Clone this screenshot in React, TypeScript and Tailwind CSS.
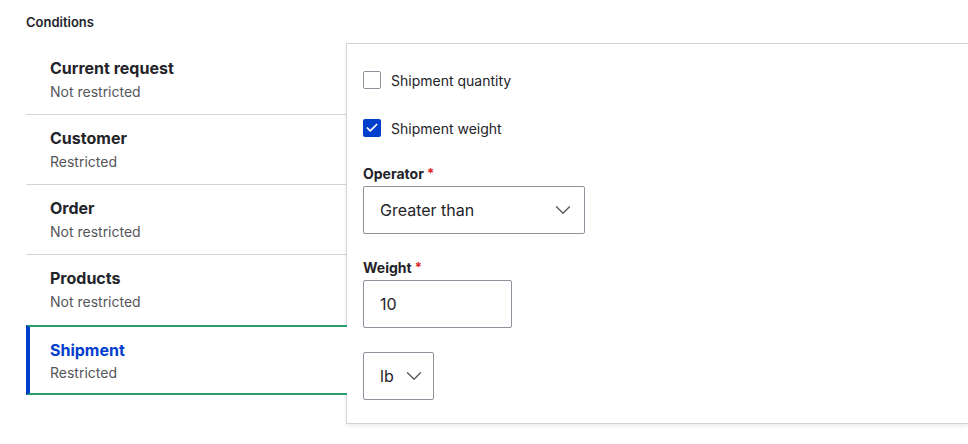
import { Check, ChevronDown } from "lucide-react";

const tabs = [
  { title: "Current request", summary: "Not restricted" },
  { title: "Customer", summary: "Restricted" },
  { title: "Order", summary: "Not restricted" },
  { title: "Products", summary: "Not restricted" },
];

const FieldLabel = ({ children }: { children: string }) => (
  <div className="flex h-5 items-start text-[14px] leading-5 font-bold">
    {children}
    <span className="ml-[3px] mt-px text-[13px] leading-4 text-[#dc2323]">*</span>
  </div>
);

const Checkbox = ({ label, checked }: { label: string; checked?: boolean }) => (
  <label className="flex h-6 items-center gap-[10px] text-[14px] text-[#232429]">
    {checked ? (
      <span className="flex h-[18px] w-[18px] items-center justify-center rounded-[2px] bg-[#003ecc]">
        <Check className="h-[14px] w-[14px] text-white" strokeWidth={3} />
      </span>
    ) : (
      <span className="h-[18px] w-[18px] rounded-[2px] border border-[#8e929c] bg-white" />
    )}
    {label}
  </label>
);

export default function App() {
  return (
    <div className="h-[444px] w-[968px] overflow-hidden bg-white font-['Inter',sans-serif] text-[#232429]">
      <h2 className="pl-[26px] pt-[13px] text-[13px] leading-[18px] font-semibold">Conditions</h2>

      <div className="mt-[12px] flex pl-[26px]">
        {/* vertical tab menu */}
        <ul className="mt-[2px] w-[320px] shrink-0">
          {tabs.map((tab, i) => (
            <li
              key={tab.title}
              className={`h-[70px] pl-[24px] pt-[11px] ${i < 3 ? "border-b border-[#d3d4d9]" : ""}`}
            >
              <div className="text-[16px] leading-6 font-bold">{tab.title}</div>
              <div className="text-[14px] leading-6 text-[#55565b]">{tab.summary}</div>
            </li>
          ))}
          <li className="relative z-10 -mr-px h-[70px] border-y-2 border-l-4 border-y-[#26a269] border-l-[#003ecc] bg-white pl-[20px] pt-[11px]">
            <div className="text-[16px] leading-6 font-bold text-[#003ecc]">Shipment</div>
            <div className="text-[14px] leading-[22px] text-[#55565b]">Restricted</div>
          </li>
        </ul>

        {/* tab pane */}
        <div className="flex-1 border-y border-l border-[#d3d4d9] bg-white px-4 pb-[23px] pt-6 shadow-[0_2px_4px_rgba(0,0,0,0.08)]">
          <Checkbox label="Shipment quantity" />
          <div className="mt-6">
            <Checkbox label="Shipment weight" checked />
          </div>

          <div className="mt-6">
            <FieldLabel>Operator</FieldLabel>
          </div>
          <div className="mt-[2px] flex h-12 w-[222px] items-center justify-between rounded-[2px] border border-[#8e929c] pl-4 pr-[8px] text-[16px]">
            Greater than
            <ChevronDown className="h-[26px] w-[26px] text-[#55565b]" strokeWidth={1.2} />
          </div>

          <div className="mt-6">
            <FieldLabel>Weight</FieldLabel>
          </div>
          <div className="mt-[2px] flex h-12 w-[149px] items-center rounded-[2px] border border-[#8e929c] pl-4 text-[16px]">
            10
          </div>

          <div className="mt-6 flex h-12 w-[71px] items-center gap-[7px] rounded-[2px] border border-[#8e929c] pl-4 text-[16px]">
            lb
            <ChevronDown className="h-[26px] w-[26px] shrink-0 text-[#55565b]" strokeWidth={1.2} />
          </div>
        </div>
      </div>
    </div>
  );
}
